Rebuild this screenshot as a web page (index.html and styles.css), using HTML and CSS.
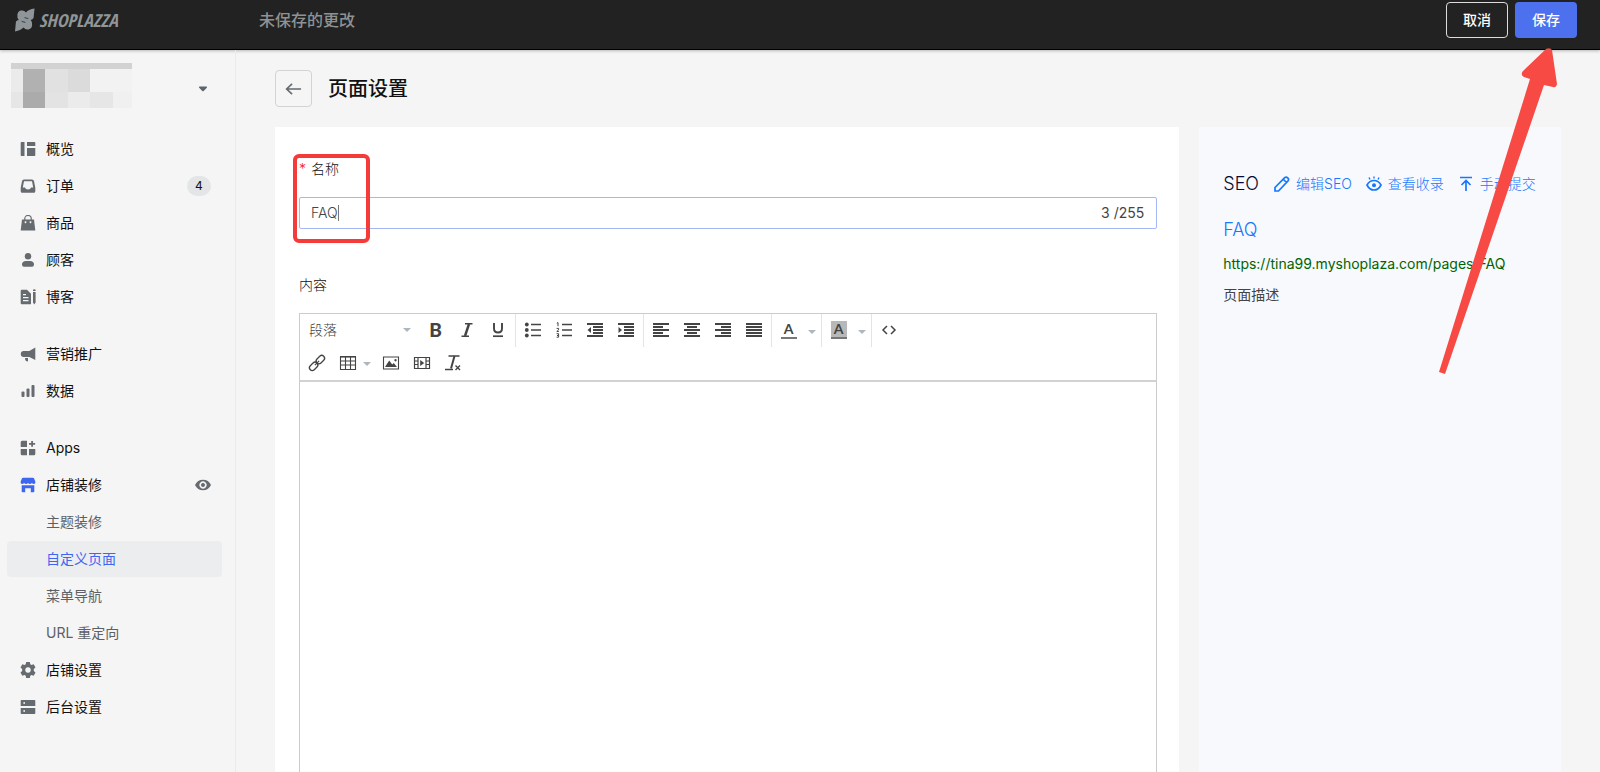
FILE: index.html
```html
<!DOCTYPE html>
<html lang="zh-CN">
<head>
<meta charset="utf-8">
<meta name="viewport" content="width=device-width, initial-scale=1">
<title>页面设置</title>
<link rel="stylesheet" href="styles.css">
</head>
<body>
<header class="topbar">
  <div class="brand">
    <svg class="brand-mark" viewBox="0 0 21 24" aria-hidden="true"><path d="M20.500 0L19.500 10Q18.500 11.500 16.500 12Q18.500 14 18 17.500A5 5 0 0 1 9 20Q6 23 0 24L1 13.500Q2 12.500 4 12Q2 10 2.500 6.500A5 5 0 0 1 11.500 4Q14 1 20.500 0Z" fill="currentColor"/><path d="M10 9.500l4 1M7 13.500l4 1" stroke="#222" stroke-width=".8"/></svg>
    <span class="brand-name">SHOPLAZZA</span>
  </div>
  <span class="unsaved">未保存的更改</span>
  <button class="btn btn-outline" type="button">取消</button>
  <button class="btn btn-primary" type="button">保存</button>
</header>
<div class="layout">
  <aside class="sidebar">
    <button class="store" type="button" aria-label="切换店铺">
      <svg class="store-logo" viewBox="0 0 121 45" aria-hidden="true" shape-rendering="crispEdges">
        <path fill="#d2d2d2" d="M0 0h121v6H0z"/><path fill="#ebebeb" d="M0 6h12v23H0z"/><path fill="#b1b1b1" d="M12 6h22v23H12z"/><path fill="#e1e1e1" d="M34 6h23v23H34z"/><path fill="#dbdbdb" d="M57 6h22v23H57z"/><path fill="#f2f2f2" d="M79 6h42v23H79z"/>
        <path fill="#e6e6e6" d="M0 29h12v16H0z"/><path fill="#ababab" d="M12 29h22v16H12z"/><path fill="#e3e3e3" d="M34 29h23v16H34z"/><path fill="#ebebeb" d="M57 29h22v16H57z"/><path fill="#e6e6e6" d="M79 29h23v16H79z"/><path fill="#f0f0f0" d="M102 29h19v16h-19z"/>
      </svg>
      <svg class="store-caret" viewBox="0 0 10 6" aria-hidden="true"><path d="M1.500 .5h7q1 .3.300 1.200L5.700 5q-.7.600-1.400 0L1.200 1.700Q.5.800 1.500.5Z" fill="currentColor"/></svg>
    </button>
    <nav>
      <ul class="menu">
        <li><a class="item" href="#"><svg class="icon" viewBox="0 0 16 16"><path d="M1.500 1h3v14h-3q-.8 0-.8-.8V1.800q0-.8.800-.8ZM7 1h7.500q.8 0 .8.800V5H7ZM7 7h8.300v7.200q0 .8-.8.800H7Z"/></svg>概览</a></li>
        <li><a class="item" href="#"><svg class="icon" viewBox="0 0 16 16"><path fill-rule="evenodd" d="M4 1.500h8q1.700 0 2 1.600l1.300 6.600v3.500q0 1.500-1.500 1.500H2.200q-1.500 0-1.500-1.500V9.700L2 3.100q.3-1.600 2-1.600ZM4 3.200 2.800 9.500H5q.4 2 3 2t3-2h2.200L12 3.200Z"/></svg>订单<span class="badge">4</span></a></li>
        <li><a class="item" href="#"><svg class="icon" viewBox="0 0 16 16"><path fill-rule="evenodd" d="M2 4.500h12l1.300 11H.7ZM5.500 6.300a.9.900 0 1 0 .01 0ZM10.500 6.300a.9.900 0 1 0 .01 0Z"/><path d="M4.800 5V3.500a3.200 3 0 0 1 6.400 0V5" fill="none" stroke="currentColor" stroke-width="1.200"/></svg>商品</a></li>
        <li><a class="item" href="#"><svg class="icon" viewBox="0 0 16 16"><circle cx="8" cy="4.300" r="3.200"/><path d="M2 12.500q0-3.500 4-3.500h4q4 0 4 3.500 0 2.200-2 2.200H4q-2 0-2-2.200Z"/></svg>顾客</a></li>
        <li><a class="item" href="#"><svg class="icon" viewBox="0 0 16 16"><path fill-rule="evenodd" d="M1.700.7H7l4 4v10.600H1.700q-1 0-1-1V1.700q0-1 1-1ZM3 5v1.200h3V5ZM3 8v1.200h5.500V8ZM3 11v1.200h5.500V11Z"/><path d="M13 3h2.600v10.500l-1.300 2-1.300-2ZM13 1q0-.8 1.300-.8t1.300.8v1H13Z"/></svg>博客</a></li>
      </ul>
      <ul class="menu">
        <li><a class="item" href="#"><svg class="icon" viewBox="0 0 16 16"><path d="M15.300 1.500v12.600L9.300 11H3Q.7 10.500.7 8T3 5h6.300ZM5 12h3v3.500q-3 0-3-3.500Z"/></svg>营销推广</a></li>
        <li><a class="item" href="#"><svg class="icon" viewBox="0 0 16 16"><rect x="1.500" y="8.500" width="3" height="5.500" rx="1"/><rect x="6.500" y="5.500" width="3" height="8.500" rx="1"/><rect x="11.500" y="2" width="3" height="12" rx="1"/></svg>数据</a></li>
      </ul>
      <ul class="menu">
        <li><a class="item" href="#"><svg class="icon" viewBox="0 0 16 16"><path d="M2.200.7H7V7H.7V2.200Q.7.700 2.200.7ZM.7 9H7v6.300H2.200q-1.500 0-1.500-1.500ZM9 9h6.300v4.800q0 1.500-1.500 1.500H9ZM11.200.9H13V3h2.100v1.800H13v2h-1.800v-2H9V3h2.200Z"/></svg>Apps</a></li>
        <li>
          <a class="item" href="#"><svg class="icon icon-active" viewBox="0 0 16 16"><path d="M3 .8h10q.8 0 1.100.8l1.300 3.200q.2 2.300-1.500 2.300-1.200 0-2-1.100-.8 1.100-2 1.100T8 6Q7.200 7.100 6.100 7.100T4.100 6q-.8 1.100-2 1.100Q.4 7.100.6 4.800L1.900 1.600Q2.200.8 3 .8Z"/><path d="M1.700 8.300h12.600v6.200q0 .8-.8.800h-2.700v-4H5.200v4H2.500q-.8 0-.8-.8Z"/></svg>店铺装修<svg class="icon eye" viewBox="0 0 16 16" aria-hidden="true"><path fill-rule="evenodd" d="M8 2.700q5.500 0 8 5.300-2.500 5.300-8 5.300T0 8q2.500-5.300 8-5.300ZM8 4.300a3.700 3.700 0 1 0 .01 0ZM8 6a2 2 0 1 1-.01 0Z"/></svg></a>
          <ul class="submenu">
            <li><a class="item sub" href="#">主题装修</a></li>
            <li><a class="item sub current" href="#" aria-current="page">自定义页面</a></li>
            <li><a class="item sub" href="#">菜单导航</a></li>
            <li><a class="item sub" href="#">URL 重定向</a></li>
          </ul>
        </li>
        <li><a class="item" href="#"><svg class="icon" viewBox="0 0 16 16"><path fill-rule="evenodd" d="M6.200 0h3.600l.5 2.300 1.200.7 2.200-.8 1.800 3.200L13.800 7v2l1.700 1.600-1.800 3.200-2.200-.8-1.200.7-.5 2.300H6.200l-.5-2.300-1.200-.7-2.200.8L.5 10.600 2.200 9V7L.5 5.400l1.800-3.200 2.200.8 1.200-.7ZM8 5.200a2.800 2.800 0 1 0 .01 0Z"/></svg>店铺设置</a></li>
        <li><a class="item" href="#"><svg class="icon" viewBox="0 0 16 16"><path fill-rule="evenodd" d="M1.500 1h13q.8 0 .8.800V7H.7V1.800q0-.8.800-.8ZM3.500 3v2h1.300V3ZM.7 9h14.600v5.200q0 .8-.8.800h-13q-.8 0-.8-.8ZM3.500 11v2h1.300v-2Z"/></svg>后台设置</a></li>
      </ul>
    </nav>
  </aside>
  <main class="main">
    <div class="page-head">
      <button class="back" type="button" aria-label="返回"><svg viewBox="0 0 18 14"><path d="M17 7H2M7.500 1.500 1.700 7l5.800 5.500"/></svg></button>
      <h1>页面设置</h1>
    </div>
    <div class="columns">
      <section class="card">
        <div class="field name-field">
          <label for="name"><span class="required">*</span>名称</label>
          <div class="input-box">
            <input id="name" type="text" value="FAQ" maxlength="255">
            <span class="count">3 /255</span>
            <i class="text-cursor"></i>
          </div>
          <div class="highlight"></div>
        </div>
        <div class="field grow">
          <label for="content">内容</label>
          <div class="editor">
            <div class="toolbar">
              <div class="row">
                <div class="group">
                  <div class="format"><select aria-label="格式"><option>段落</option></select><svg class="caret" viewBox="0 0 8 4"><path d="M0 0h8L4 4Z"/></svg></div>
                  <button class="tool tool-bold" type="button" aria-label="加粗">B</button>
                  <button class="tool" type="button" aria-label="斜体"><svg viewBox="0 0 16 16"><path d="M6 1.700h7.500M2.500 14.300H10" stroke-width="1.400"/><path d="M10 2 6 14" stroke-width="2.400"/></svg></button>
                  <button class="tool" type="button" aria-label="下划线"><svg viewBox="0 0 16 16"><path d="M4 1v5.500q0 4 4 4t4-4V1" stroke-width="1.900"/><path d="M3 14.200h10" stroke-width="1.700"/></svg></button>
                </div>
                <div class="group">
                  <button class="tool" type="button" aria-label="项目符号"><svg viewBox="0 0 16 16"><path d="M6 2.500h10M6 8h10M6 13.500h10" stroke-width="1.700"/><g fill="currentColor" stroke="none"><circle cx="1.800" cy="2.500" r="1.900"/><circle cx="1.800" cy="8" r="1.900"/><circle cx="1.800" cy="13.500" r="1.900"/></g></svg></button>
                  <button class="tool" type="button" aria-label="编号"><svg viewBox="0 0 16 16"><path d="M6 2.500h10M6 8h10M6 13.500h10" stroke-width="1.700"/><path d="M.8 1.200 2 .6v3.600M.6 6.400h2v1.500l-1.800 1.600h2M.6 11.700h2v3.500h-2M1 13.500h1.500" stroke-width="1"/></svg></button>
                  <button class="tool" type="button" aria-label="减少缩进"><svg viewBox="0 0 16 16"><path d="M0 2h16M6 5h10M6 8h10M6 11h10M0 14h16" stroke-width="1.800"/><path d="M4 5v6L.5 8Z" fill="currentColor" stroke="none"/></svg></button>
                  <button class="tool" type="button" aria-label="增加缩进"><svg viewBox="0 0 16 16"><path d="M0 2h16M6 5h10M6 8h10M6 11h10M0 14h16" stroke-width="1.800"/><path d="M.5 5v6L4 8Z" fill="currentColor" stroke="none"/></svg></button>
                </div>
                <div class="group">
                  <button class="tool" type="button" aria-label="左对齐"><svg viewBox="0 0 16 16"><path d="M0 2h16M0 5h10M0 8h16M0 11h10M0 14h16" stroke-width="1.800"/></svg></button>
                  <button class="tool" type="button" aria-label="居中"><svg viewBox="0 0 16 16"><path d="M0 2h16M3 5h10M0 8h16M3 11h10M0 14h16" stroke-width="1.800"/></svg></button>
                  <button class="tool" type="button" aria-label="右对齐"><svg viewBox="0 0 16 16"><path d="M0 2h16M6 5h10M0 8h16M6 11h10M0 14h16" stroke-width="1.800"/></svg></button>
                  <button class="tool" type="button" aria-label="两端对齐"><svg viewBox="0 0 16 16"><path d="M0 2h16M0 5h16M0 8h16M0 11h16M0 14h16" stroke-width="1.800"/></svg></button>
                </div>
                <div class="group">
                  <button class="tool" type="button" aria-label="文字颜色"><span class="letter">A</span></button>
                  <button class="tool-caret" type="button" aria-label="选择文字颜色"><svg class="caret" viewBox="0 0 8 4"><path d="M0 0h8L4 4Z"/></svg></button>
                </div>
                <div class="group">
                  <button class="tool" type="button" aria-label="背景颜色"><span class="letter letter-fill">A</span></button>
                  <button class="tool-caret" type="button" aria-label="选择背景颜色"><svg class="caret" viewBox="0 0 8 4"><path d="M0 0h8L4 4Z"/></svg></button>
                </div>
                <div class="group group-last">
                  <button class="tool" type="button" aria-label="源代码"><svg viewBox="0 0 16 16"><path d="M6 4 2 8l4 4M10 4l4 4-4 4" stroke-width="1.500"/></svg></button>
                </div>
              </div>
              <div class="row">
                <div class="group group-last">
                  <button class="tool" type="button" aria-label="链接"><svg viewBox="0 0 16 16"><g transform="rotate(-45 8 8)"><rect x="-1.500" y="5.200" width="9.500" height="5.600" rx="2.800" stroke-width="1.300"/><rect x="8" y="5.200" width="9.500" height="5.600" rx="2.800" stroke-width="1.300"/><path d="M5 8h6" stroke-width="1.300"/></g></svg></button>
                  <button class="tool" type="button" aria-label="表格"><svg viewBox="0 0 16 16"><path d="M.5 1.500h15v13H.5ZM.5 6h15M.5 10h15M5.500 2v12M10.500 2v12" stroke-width="1.100"/><path d="M0 1.800h16" stroke-width="1.600"/></svg></button>
                  <svg class="caret table-caret" viewBox="0 0 8 4"><path d="M0 0h8L4 4Z"/></svg>
                  <button class="tool tool-image" type="button" aria-label="图片"><svg viewBox="0 0 16 16"><path d="M.5 2h15v12H.5Z" stroke-width="1.100"/><path d="m2 12 4.200-6.500 3 4 1.500-1.500L14 12ZM12.500 4a1.200 1.200 0 1 0 .01 0Z" fill="currentColor" stroke="none"/></svg></button>
                  <button class="tool" type="button" aria-label="视频"><svg viewBox="0 0 16 16"><path d="M.5 2.500h15v11H.5ZM4 2.500v11M12 2.500v11M.5 6H4M.5 9.500H4M12 6h3.500M12 9.500h3.500" stroke-width="1.200"/><path d="M6.200 5v6l4-3Z" fill="currentColor" stroke="none"/></svg></button>
                  <button class="tool" type="button" aria-label="清除格式"><svg viewBox="0 0 16 16"><path d="M3.500 1h11M0 14.500h8" stroke-width="1.700"/><path d="M9.500 1 6 13.500" stroke-width="2"/><path d="m10.500 10.500 4.500 4.500M15 10.500 10.500 15" stroke-width="1.400"/></svg></button>
                </div>
              </div>
            </div>
            <textarea id="content"></textarea>
          </div>
        </div>
      </section>
      <section class="seo">
        <div class="seo-head">
          <h2>SEO</h2>
          <div class="seo-links">
            <a href="#"><svg viewBox="0 0 16 16"><path d="M1 15v-3.500L10.700 1.600q1.500-1.200 3 .3t.3 3L4.500 15ZM9.500 3.500l3 3" stroke-width="1.700"/></svg>编辑SEO</a>
            <a href="#"><svg viewBox="0 0 16 16"><path d="M1 9q2.500-4.500 7-4.500T15 9q-2.500 5-7 5T1 9Z" stroke-width="1.700"/><circle cx="8" cy="9.200" r="2" fill="currentColor" stroke="none"/><path d="M8 .5v2M3 1.500l1 2M13 1.500l-1 2" stroke-width="1.400"/></svg>查看收录</a>
            <a href="#"><svg viewBox="0 0 16 16"><path d="M2 1.500h12M8 15V5M3.500 9 8 4.500 12.500 9" stroke-width="1.700"/></svg>手动提交</a>
          </div>
        </div>
        <a class="seo-title" href="#">FAQ</a>
        <p class="seo-url">https://tina99.myshoplaza.com/pages/FAQ</p>
        <p class="seo-desc">页面描述</p>
      </section>
    </div>
  </main>
</div>
<svg class="pointer-arrow" viewBox="0 0 120 328" aria-hidden="true"><path d="M0 325 91 32l-6-2q-4-2-1-6L107 2q4-2 6 1l5 34q-1 4-4 3l-9-2L6 327Z"/></svg>
</body>
</html>
```

FILE: styles.css
```css
* { box-sizing: border-box; }
body {
  position: relative;
  display: flex;
  flex-direction: column;
  min-height: 100vh;
  margin: 0;
  background: #f5f5f5;
  color: #111;
  font: 14px/22px Inter, "Noto Sans CJK SC", sans-serif;
}
h1, h2, p, ul { margin: 0; padding: 0; font-weight: 400; }
ul { list-style: none; }
a { color: inherit; text-decoration: none; }
button, input, select, textarea { font: inherit; color: inherit; }
button { padding: 0; border: 0; background: none; }

.topbar {
  display: flex;
  align-items: center;
  padding: 2px 23px 11px 15px;
  border-bottom: 1px solid #000;
  background: #222;
  box-shadow: 0 1px 3px rgba(0, 0, 0, .25);
}
.brand {
  display: flex;
  align-items: center;
  gap: 4px;
  width: 244px;
  color: #8f9598;
}
.brand-mark { width: 20px; height: 24px; }
.brand-name { font: italic 700 18px/24px "Liberation Sans Narrow", "Open Sans Condensed", "DejaVu Sans Condensed", "Liberation Sans", sans-serif; }
.unsaved { flex: 1; color: #8f9294; font-size: 16px; font-weight: 500; }
.btn { width: 62px; height: 36px; border-radius: 4px; color: #fff; font-weight: 500; }
.btn-outline { margin-right: 7px; border: 1px solid #ddd; }
.btn-primary { background: #4c70ee; }

.layout { display: flex; flex: 1; }
.sidebar {
  flex: none;
  width: 236px;
  padding: 13px 13px 0 7px;
  border-right: 1px solid #ebebeb;
}
.store {
  display: flex;
  align-items: center;
  justify-content: space-between;
  width: 100%;
  height: 45px;
  margin-bottom: 23px;
  padding: 0 14px 0 4px;
}
.store-logo { width: 121px; height: 45px; }
.store-caret { width: 10px; height: 6px; margin-top: 6px; color: #5f6468; }
.menu { margin-bottom: 21px; }
.item {
  display: flex;
  align-items: center;
  gap: 10px;
  height: 36px;
  margin-bottom: 1px;
  padding: 0 11px 0 13px;
  border-radius: 4px;
}
.icon { flex: none; width: 16px; height: 16px; fill: currentColor; color: #666b70; }
.icon-active { color: #3f66f0; }
.eye { margin-left: auto; }
.badge {
  width: 24px;
  margin-left: auto;
  border-radius: 10px;
  background: #e3e5e7;
  font-size: 12px;
  line-height: 20px;
  text-align: center;
}
.sub { padding-left: 39px; color: #5d6165; }
.current { background: #ecedef; color: #3f66f0; }

.main { display: flex; flex: 1; flex-direction: column; min-width: 0; padding: 20px 39px 0; }
.page-head { display: flex; align-items: center; gap: 16px; margin-bottom: 20px; }
.back {
  display: grid;
  place-items: center;
  width: 37px;
  height: 37px;
  border: 1px solid #d2d3d4;
  border-radius: 4px;
}
.back svg { width: 17px; height: 14px; fill: none; stroke: #666a6e; stroke-width: 1.700; }
h1 { font-size: 20px; line-height: 28px; font-weight: 500; }
.columns { display: grid; flex: 1; grid-template-columns: 5fr 2fr; gap: 20px; }
.card { display: flex; flex-direction: column; padding: 31px 22px 0 24px; background: #fff; }
.field > label { display: block; margin-bottom: 17px; font-weight: 300; }
.name-field { position: relative; margin-bottom: 45px; }
.required { margin-right: 5px; color: #f5222d; }
.input-box {
  position: relative;
  display: flex;
  align-items: center;
  height: 32px;
  padding: 0 12px 0 11px;
  border: 1px solid #a5b6f5;
  border-radius: 2px;
  color: #444;
}
.input-box input { flex: 1; min-width: 0; padding: 0; border: 0; outline: 0; background: none; font-weight: 300; }
.text-cursor { position: absolute; top: 7px; left: 38px; width: 1px; height: 16px; background: #777; }
.highlight {
  position: absolute;
  top: -4px;
  left: -6px;
  width: 77px;
  height: 89px;
  border: 4px solid #f53a3a;
  border-radius: 6px;
}
.grow { display: flex; flex: 1; flex-direction: column; }
.editor { display: flex; flex: 1; flex-direction: column; border: 1px solid #ccc; border-bottom: 0; }
.toolbar { border-bottom: 2px solid #d2d2d2; }
.row { display: flex; height: 33px; }
.group { display: flex; align-items: flex-start; padding: 0 2px 0 1px; border-right: 1px solid #e4e4e4; }
.group-last { border: 0; }
.format { display: grid; align-items: center; width: 119px; height: 32px; }
.format select, .format .caret { grid-area: 1 / 1; }
.format select { padding: 0 8px; border: 0; appearance: none; background: none; color: #444; font-weight: 300; }
.format .caret { justify-self: end; margin-right: 9px; }
.tool { display: grid; flex: none; place-items: center; width: 31px; height: 32px; color: #444; }
.tool svg { width: 16px; height: 16px; overflow: visible; fill: none; stroke: currentColor; }
.tool-bold { font: 900 19px/20px Lato, sans-serif; }
.tool-caret { width: 15px; height: 32px; line-height: 4px; }
.tool-image { margin-left: 4px; }
.caret { flex: none; width: 8px; height: 4px; fill: #aeb6be; }
.table-caret { align-self: center; }
.letter { width: 16px; border-bottom: 2px solid #777; font: 700 14px/16px Lato, sans-serif; }
.letter-fill { background: #b8b8b8; }
.editor textarea { flex: 1; width: 100%; padding: 12px; border: 0; outline: 0; resize: none; }

.seo { padding: 43px 20px 0 24px; background: #f8f9fc; font-weight: 300; }
.seo-head { display: flex; align-items: center; gap: 15px; margin-bottom: 18px; }
h2, .seo-title { font-size: 18px; line-height: 28px; }
h2 { color: #0a0a33; font-weight: 300; }
.seo-links { display: flex; gap: 14px; color: #1677ff; white-space: nowrap; }
.seo-links a { display: flex; align-items: center; gap: 6px; }
.seo-links svg { width: 16px; height: 16px; fill: none; stroke: currentColor; }
.seo-title { display: block; margin-bottom: 9px; color: #1677ff; }
.seo-url { margin-bottom: 9px; color: #006400; }
.seo-desc { color: #444; }

.pointer-arrow { position: absolute; top: 47px; right: 41px; width: 120px; height: 328px; fill: #f74a45; }
```
